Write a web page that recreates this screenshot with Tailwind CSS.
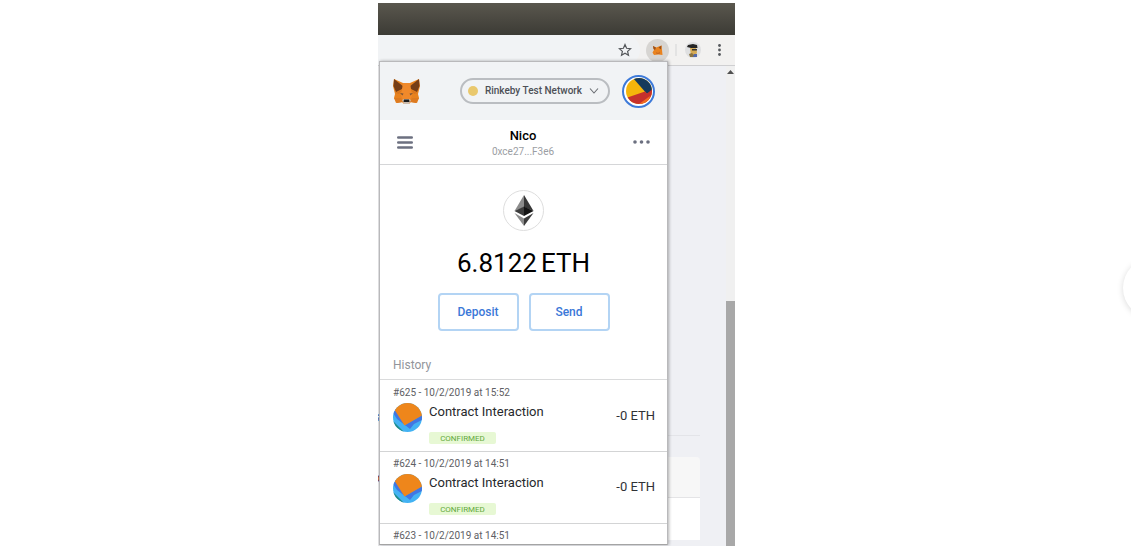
<!DOCTYPE html>
<html lang="en">
<head>
<meta charset="utf-8">
<meta name="viewport" content="width=device-width, initial-scale=1">
<title>MetaMask</title>
<script src="https://cdn.jsdelivr.net/npm/@tailwindcss/browser@4"></script>
</head>
<body class="relative flex min-h-screen justify-center overflow-hidden bg-white pt-[3px] pr-[18px] pb-px font-['Roboto',sans-serif]">

<svg width="0" height="0" class="absolute" aria-hidden="true">
  <defs>
    <symbol id="fox" viewBox="0 0 27 25">
      <path d="M1 0 10 4h7L26 0l1 7-2 8 1 4-2 5-6-1-2 2h-5l-2-2-6 1-2-5 1-4-2-8z" fill="#e8821e"/>
      <path d="M1 0 11 8 9 10 3 13 .5 7zM26 0 16 8l2 2 6 3 2.500-6z" fill="#763d16"/>
      <path d="M10 4h7l1 6 1 7-3 5h-5l-3-5 1-7z" fill="#f0892a"/>
      <path d="M2 14l7-3-3 4zM25 14l-7-3 3 4z" fill="#d9761f"/>
      <path d="M7 14 10.500 14.500 9.500 16.500zM20 14 16.500 14.500 17.500 16.500z" fill="#7d5536"/>
      <path d="M1 19h7l2 4-6 1zM26 19h-7l-2 4 6 1z" fill="#dd7a20"/>
      <path d="M9 21l2-1h5l2 1-2 4h-5z" fill="#cbbcae"/>
      <path d="M11 20.500h5l.5 2.500h-6z" fill="#1b1b1b"/>
    </symbol>
    <symbol id="jazz" viewBox="0 0 29 29">
      <clipPath id="disc"><circle cx="14.500" cy="14.500" r="14.500"/></clipPath>
      <g clip-path="url(#disc)">
        <path d="M0 0h29v29H0z" fill="#43b2f3"/>
        <path d="M0 18 11 29H0z" fill="#1f8c88"/>
        <path d="M0 6h3l10 17-9-7-4-6zM12 22 29 12v5l-8 4-4 5z" fill="#4177e2"/>
        <path d="M3 0h26v12.500L11.500 22.500 1 6z" fill="#ee861b"/>
      </g>
    </symbol>
  </defs>
</svg>

<div class="relative flex w-[357px] flex-col overflow-hidden">
  <div class="h-8 shrink-0 bg-linear-to-b from-[#5a574e] to-[#3c3b35]"></div>

  <div class="flex h-[31px] shrink-0 items-center justify-end border-b border-[#cfcfd1] bg-[#f2f1f0] pr-[9px]">
    <div class="flex h-full flex-1 items-center justify-end rounded-r-full bg-[#f1f3f5] pr-2">
      <button aria-label="Bookmark this page"><svg class="size-3.5" viewBox="0 0 14 14" fill="none" stroke="#55585c" stroke-width="1.200" stroke-linejoin="miter"><path d="M7 1.600 8.600 5.300l4 .4-3 2.700.9 3.900L7 10.200l-3.500 2.100.9-3.900-3-2.700 4-.4z"/></svg></button>
    </div>
    <button aria-label="MetaMask" class="ml-[6px] flex size-[23px] items-center justify-center rounded-full bg-[#d7d5d2]"><svg class="size-[11px]" viewBox="0 0 11 11"><path d="M1 1l3 1.500L9.500.5 10 5l.5 5-4-.5L2 10 .5 7.500 2 5z" fill="#e9831f"/><path d="M1 1l3 1.500L3 5 1.500 4zM9.500.5 6.500 2.500 9 4.500z" fill="#9a4f18"/><path d="M4 7l2 1 2-1.500L7.500 9h-3z" fill="#c96a22"/></svg></button>
    <span class="ml-[6px] h-3 w-0.5 bg-[#e3e3e3]"></span>
    <button aria-label="Profile" class="ml-2 flex size-4 items-center justify-center rounded-full bg-[#dfe0e1]">
      <svg class="h-[15px] w-3" viewBox="0 0 12 15"><path d="M3 5h6l1 4-1 4H4z" fill="#d6ab56"/><path d="M1 2 6 1l4 1 .5 3H4L0 4z" fill="#252525"/><path d="M5 6h5v1.500H5z" fill="#333"/><path d="M2 11l3-1 2 2v2H3z" fill="#8c7440"/><path d="M7 11h3v3H6z" fill="#536aab"/></svg>
    </button>
    <button aria-label="Menu" class="ml-3 px-1"><svg class="h-3 w-[5px]" viewBox="0 0 5 12" fill="#55585c"><circle cx="2.500" cy="1.500" r="1.400"/><circle cx="2.500" cy="6" r="1.400"/><circle cx="2.500" cy="10.500" r="1.400"/></svg></button>
  </div>

  <div class="flex flex-1 bg-[#eff0f4]">
    <div class="flex flex-1 flex-col justify-end pr-[26px] pb-[6px]">
      <div class="mb-[21px] border-t border-[#e3e4e8]"></div>
      <div class="h-10 rounded-t bg-[#f7f7f7]"></div>
      <div class="h-[43px] border-t border-[#e4e4e6] bg-white"></div>
    </div>
    <div class="flex w-[9px] flex-col justify-between bg-[#f0f0f0]">
      <svg class="mt-[3px] h-2 w-[9px]" viewBox="0 0 9 8"><path d="M1 5 4.500 1 8 5z" fill="#505050"/></svg>
      <div class="h-[245px] bg-[#a8a8a8]"></div>
    </div>
  </div>

  <!-- Strip of the web page that stays visible left of the popup -->
  <div class="absolute top-[63px] bottom-0 left-0 flex w-0.5 flex-col items-end justify-end gap-[45px] overflow-hidden bg-[#e9e9eb] pb-[60px] text-xs leading-4">
    <span class="text-[#3b6fb5]">s</span>
    <span class="text-[#7a2f2f]">o</span>
  </div>

  <!-- Extension popup over the page -->
  <main class="absolute top-[58px] bottom-px left-px flex w-[289px] flex-col overflow-hidden border border-[#b9b9bb] border-b-[#a4a4a4] bg-white shadow-[1px_0_3px_rgba(0,0,0,0.3)]">
    <header class="flex h-[58px] shrink-0 items-center justify-between bg-[#f1f3f5] pr-3 pl-[13px]">
      <svg class="h-[25px] w-[27px]"><use href="#fox"/></svg>
      <div class="flex items-center gap-3">
        <button class="flex h-[26px] w-[150px] items-center justify-between rounded-full border-2 border-[#babdc1] pr-[9px] pl-[6px] pb-px text-[10px] font-medium text-[#4d5057]">
          <span class="size-[10px] rounded-full bg-[#e9c86d]"></span>
          <span>Rinkeby Test Network</span>
          <svg class="h-2 w-[10px]" viewBox="0 0 10 8" fill="none" stroke="#6a6d72" stroke-width="1.100"><path d="M1 1.500 5 6l4-4.500"/></svg>
        </button>
        <button aria-label="Accounts" class="flex size-[33px] items-center justify-center rounded-full border-2 border-[#3d7ad9] bg-white">
          <svg class="size-[26px]" viewBox="0 0 26 26"><clipPath id="face"><circle cx="13" cy="13" r="13"/></clipPath><g clip-path="url(#face)"><path d="M0 0h26v26H0z" fill="#f5b40b"/><path d="M7 0h19v13l-5 3z" fill="#15395c"/><path d="M0 20 19 13.500l2 2 5-4v15H0z" fill="#c6302c"/><path d="M13 26 24 18l-2 8z" fill="#f26a22"/></g></svg>
        </button>
      </div>
    </header>

    <section class="flex h-[45px] shrink-0 items-center justify-between border-b border-[#d5d6d8] px-[17px]">
      <button aria-label="Open menu"><svg class="h-[13px] w-4" viewBox="0 0 16 13" stroke="#6c7080" stroke-width="2.400" stroke-linecap="round"><path d="M1.200 1.500h13.600M1.200 6.500h13.600M1.200 11.500h13.600"/></svg></button>
      <div class="pt-[3px] text-center">
        <h1 class="text-[13px] leading-4 font-medium text-black">Nico</h1>
        <p class="text-[10px] leading-[15px] text-[#9b9ea3]">0xce27...F3e6</p>
      </div>
      <button aria-label="Account options"><svg class="h-1 w-[17px]" viewBox="0 0 17 4" fill="#6c7080"><circle cx="2" cy="2" r="1.800"/><circle cx="8.500" cy="2" r="1.800"/><circle cx="15" cy="2" r="1.800"/></svg></button>
    </section>

    <section class="flex shrink-0 flex-col items-center pt-[25px]">
      <div class="flex size-[41px] items-center justify-center rounded-full border border-[#dedede]">
        <svg class="h-[31px] w-5" viewBox="0 0 20 31"><path d="M10 0v12L.5 16z" fill="#8c8c8c"/><path d="M10 0v12l9.500 4z" fill="#373737"/><path d="M.5 16 10 11.500V21z" fill="#3c3c3c"/><path d="M19.500 16 10 11.500V21z" fill="#141414"/><path d="M.5 18 10 23.500V31z" fill="#8c8c8c"/><path d="M19.500 18 10 23.500V31z" fill="#3c3c3c"/></svg>
      </div>
      <p class="mt-4 flex gap-1 text-[26px] leading-8 text-black"><span>6.8122</span><span>ETH</span></p>
      <div class="mt-[14px] flex gap-[10px] text-xs font-medium text-[#3b78d8]">
        <button class="h-[38px] w-[81px] rounded border-2 border-[#b3d4f4]">Deposit</button>
        <button class="h-[38px] w-[81px] rounded border-2 border-[#b3d4f4]">Send</button>
      </div>
    </section>

    <h2 class="mt-[26px] shrink-0 border-b border-[#dadbdc] px-[13px] pb-[6px] text-xs leading-4 text-[#92959b]">History</h2>
    <ul>
      <li class="h-[72px] border-b border-[#d3d4d5] pt-[5px] pr-3 pl-[13px]">
        <p class="text-[10px] leading-4 text-[#5e6064]">#625 - 10/2/2019 at 15:52</p>
        <div class="mt-[2px] flex gap-[7px]">
          <svg class="size-[29px]"><use href="#jazz"/></svg>
          <div class="flex-1">
            <p class="pt-px text-[13px] leading-4 text-[#27292c]">Contract Interaction</p>
            <p class="mt-3 h-3 w-[67px] rounded-xs bg-[#e7f8d4] text-center text-[8px] leading-[13px] text-[#63a83c]">CONFIRMED</p>
          </div>
          <p class="mt-[5px] text-[13px] leading-4 text-[#303236]">-0 ETH</p>
        </div>
      </li>
      <li class="h-[72px] border-b border-[#d3d4d5] pt-1 pr-3 pl-[13px]">
        <p class="text-[10px] leading-4 text-[#5e6064]">#624 - 10/2/2019 at 14:51</p>
        <div class="mt-[2px] flex gap-[7px]">
          <svg class="size-[29px]"><use href="#jazz"/></svg>
          <div class="flex-1">
            <p class="pt-px text-[13px] leading-4 text-[#27292c]">Contract Interaction</p>
            <p class="mt-3 h-3 w-[67px] rounded-xs bg-[#e7f8d4] text-center text-[8px] leading-[13px] text-[#63a83c]">CONFIRMED</p>
          </div>
          <p class="mt-[5px] text-[13px] leading-4 text-[#303236]">-0 ETH</p>
        </div>
      </li>
      <li class="pt-1 pr-3 pl-[13px]">
        <p class="text-[10px] leading-4 text-[#5e6064]">#623 - 10/2/2019 at 14:51</p>
      </li>
    </ul>
  </main>
</div>

<!-- Round carousel control, partly beyond the window edge -->
<button aria-label="Next" class="absolute top-[258px] -right-[52px] size-[60px] rounded-full bg-white shadow-[0_1px_6px_rgba(0,0,0,0.15)]"></button>
</body>
</html>
